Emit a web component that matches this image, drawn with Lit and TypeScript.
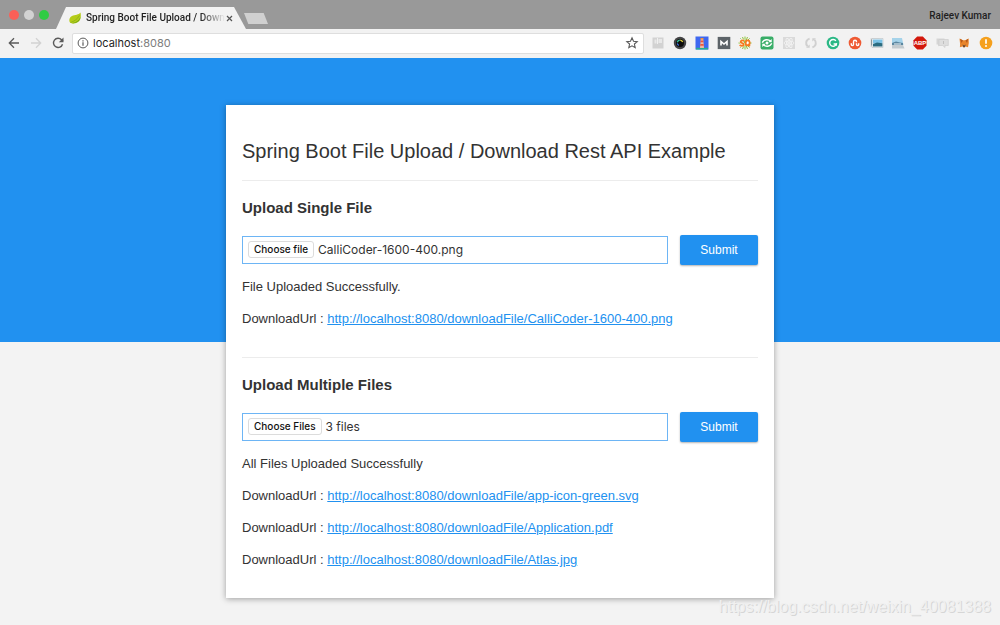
import { LitElement, html, css, svg, nothing } from "lit";
import { customElement, property } from "lit/decorators.js";

const BASE = "http://localhost:8080/downloadFile/";

const star = svg`<path d="M7 1.800l1.500 3.400 3.700.4-2.800 2.400.8 3.700L7 9.800l-3.200 1.900.8-3.700-2.800-2.400 3.700-.4z" fill="none" stroke="#5a5a5a" stroke-width="1.100"/>`;

const extensions = [
  {
    name: "Page layout",
    art: svg`<rect x="1.5" y="1.5" width="11" height="11" fill="#d2d2d2"/><path d="M3.500 3.500h2v4h-2zM7.500 3h3.500v4H7.500z" fill="#e8e8e8"/><path d="M6.500 2v6" stroke="#f0f0f0"/>`,
  },
  {
    name: "Camera",
    art: svg`<circle cx="7" cy="7" r="6.200" fill="#444446"/><circle cx="7" cy="7" r="4" fill="#0c0c0c"/><path d="M4.300 6.200a2.900 2.900 0 0 1 2.500-2.100" stroke="#38c6a0" stroke-width="1.400" fill="none"/><path d="M7.200 4.100a2.900 2.900 0 0 1 2.500 1.900" stroke="#e0cf3e" stroke-width="1.400" fill="none"/><path d="M4.300 7.300a2.900 2.900 0 0 0 1.500 2.100" stroke="#3d6fe0" stroke-width="1.200" fill="none"/>`,
  },
  {
    name: "Lighthouse",
    art: svg`<rect x=".5" y=".5" width="13" height="13" fill="#3f68f0"/><path d="M1 11.800h12v1.700H1z" fill="#27ae8f"/><path d="M5.800 3h2.400l.8 9H5z" fill="#f0b9a0"/><path d="M5.700 4.600h2.600l.2 1.700h-3zM5.400 8h3.200l.2 1.800H5.200z" fill="#f0553d"/><path d="M5.500 2h3v1.500h-3z" fill="#f59135"/>`,
  },
  {
    name: "Markdown",
    art: svg`<rect x=".7" y=".9" width="12.600" height="12.200" fill="#5c6368"/><path d="M4 9.600V5.400L7 8l3-2.600v4.200" stroke="#fff" stroke-width="1.600" fill="none"/>`,
  },
  {
    name: "SEO quake",
    art: svg`<path d="M7 .5v13M.5 7h13M2.400 2.400l9.200 9.200M11.600 2.400l-9.200 9.200M4.500 1l5 12M9.500 1l-5 12" stroke="#8fc43c" stroke-width="1"/><path d="M6.200 5C5 3.900 2.500 4.500 2.600 5.900s3.500.9 3.100 2.600S3 10 1.600 9" stroke="#fff" stroke-width="2.400" fill="none"/><path d="M6.200 5C5 3.900 2.500 4.500 2.600 5.900s3.500.9 3.100 2.600S3 10 1.600 9" stroke="#f57a1f" stroke-width="1.800" fill="none"/><ellipse cx="9.700" cy="6.900" rx="2" ry="2.600" stroke="#f57a1f" stroke-width="1.700" fill="#fff"/><path d="M9.700 8l2.300 2.300" stroke="#f57a1f" stroke-width="1.600"/>`,
  },
  {
    name: "Feed refresh",
    art: svg`<rect x=".5" y=".5" width="13" height="13" rx="2" fill="#38ad67"/><path d="M2.200 6.600C4 3.400 8 2.700 10.700 5.200M11.800 7.400C10 10.600 6 11.300 3.300 8.800" stroke="#fff" stroke-width="1.400" fill="none"/><path d="M11.700 2.900v3.400H8.300zM2.300 11.100V7.700h3.400z" fill="#fff"/><circle cx="7" cy="7" r="1.500" fill="#fff"/>`,
  },
  {
    name: "React tools",
    art: svg`<rect x="1" y="1" width="12" height="12" fill="#dadada"/><g fill="none" stroke="#f2f2f2" stroke-width=".9"><ellipse cx="7" cy="7" rx="5" ry="2"/><ellipse cx="7" cy="7" rx="5" ry="2" transform="rotate(60 7 7)"/><ellipse cx="7" cy="7" rx="5" ry="2" transform="rotate(120 7 7)"/></g><circle cx="7" cy="7" r="1" fill="#f2f2f2"/>`,
  },
  {
    name: "Sync",
    art: svg`<path d="M5.600 2.600C1.600 4 1.300 8 3.600 10.400" stroke="#d0d0d0" stroke-width="2" fill="none"/><path d="M8.400 11.400c4-1.400 4.300-5.400 2-7.800" stroke="#d0d0d0" stroke-width="2" fill="none"/><path d="M2 11.800h3.700V8.500zM12 2.200H8.300v3.300z" fill="#d0d0d0"/>`,
  },
  {
    name: "Grammar check",
    art: svg`<circle cx="7" cy="7" r="6.300" fill="#2bb886"/><path d="M9.900 4.900A3.400 3.400 0 1 0 10.300 8H7.600" stroke="#fff" stroke-width="1.400" fill="none"/><path d="M10.400 7.300v2.500" stroke="#fff" stroke-width="1.100"/>`,
  },
  {
    name: "Stumble",
    art: svg`<circle cx="7" cy="7" r="6.300" fill="#ee5a33"/><path d="M3.300 7.300v1.200a1.100 1.100 0 0 0 2.200 0V5.700a1.500 1.500 0 0 1 3 0v.6M8.500 7.300v1.200a1.100 1.100 0 0 0 2.200 0V7.300" stroke="#fff" stroke-width="1.400" fill="none"/>`,
  },
  {
    name: "Pictures",
    art: svg`<path d="M.5 2h9v9h-9z" fill="#dcdcdc"/><path d="M2 2.500h11v9H2z" fill="#f5f5f5" stroke="#b5bfc4" stroke-width=".6"/><path d="M3 3.500h9.400v4H3z" fill="#7cc3e6"/><path d="M3 8l4-1.500 5.400.7v3.300H3z" fill="#2b6c80"/><path d="M1.500 3.500v6" stroke="#8a979c"/>`,
  },
  {
    name: "Landscape",
    art: svg`<path d="M1 2h10l1.500 7H1z" fill="#a5d3ea"/><path d="M1 7l4-1.500 4 1 3 .6V9H1z" fill="#5b87a0"/><path d="M1 9h11l1.500 3.500H1z" fill="#c3cbcf"/><path d="M3 8h7" stroke="#eef5f8"/>`,
  },
  {
    name: "Ad blocker",
    art: svg`<path d="M4.200.5h5.600l3.700 3.700v5.600l-3.700 3.700H4.200L.5 9.800V4.200z" fill="#d3180c"/><text x="7" y="9.200" text-anchor="middle" font-family="Liberation Sans, sans-serif" font-size="6" font-weight="700" fill="#fff">ABP</text>`,
  },
  {
    name: "Comments",
    art: svg`<path d="M1.500 2.500h8v6H5l-2 2v-2H1.500z" fill="#d6d6d6"/><path d="M4 3.500h9.300v6H10v2l-2.200-2H4z" fill="#dedede" stroke="#cdcdcd" stroke-width=".7"/><path d="M8.500 5v3" stroke="#c0c0c0"/>`,
  },
  {
    name: "Fox",
    art: svg`<path d="M2.500 2.500L6 4.200h2.300l3.300-1.700.2 4.500-.8 4.300-2.600-.7-1.400.9-1.500-.9-2.600.7.200-3.300z" fill="#e8852b"/><path d="M3 2.800L6 4.500 4.500 7zM11.300 2.800L8.500 4.500 10 7z" fill="#b65a1c"/><path d="M5.600 8.500l1.500 1 1.500-1-.6 2.700H6.200z" fill="#6b4a33"/>`,
  },
  {
    name: "Notice",
    art: svg`<circle cx="7" cy="7" r="6.300" fill="#f5a01d"/><path d="M7 3.200v4.600" stroke="#fff" stroke-width="1.700"/><circle cx="7" cy="10" r="1" fill="#fff"/>`,
  },
];

@customElement("browser-bar")
export class BrowserBar extends LitElement {
  static styles = css`
    :host {
      display: block;
      font-family: Roboto, Inter, sans-serif;
      color: #1f1f1f;
    }
    svg {
      display: block;
      flex: none;
    }
    button {
      all: unset;
      display: block;
      flex: none;
      cursor: pointer;
    }
    .tabs {
      display: flex;
      align-items: flex-end;
      height: 29px;
      background: #999;
    }
    .lights {
      display: flex;
      align-self: center;
      gap: 5px;
      padding: 0 7px 0 9px;
    }
    .light {
      width: 10px;
      height: 10px;
      border-radius: 50%;
    }
    .close {
      background: #fb5f57;
    }
    .min {
      background: #d2d2d2;
    }
    .max {
      background: #2fcb44;
    }
    .tab {
      display: flex;
      flex: none;
      align-items: center;
      box-sizing: border-box;
      width: 190px;
      height: 22px;
      padding: 0 13px;
      background: #f2f2f2;
      clip-path: polygon(0 100%, 10px 0, 178px 0, 100% 100%);
    }
    .title {
      flex: 1;
      min-width: 0;
      margin: 0 1px 0 5px;
      white-space: nowrap;
      font-size: 10px;
      font-weight: 500;
      line-height: 16px;
      mask-image: linear-gradient(90deg, #000 82%, transparent);
    }
    .new {
      width: 24px;
      height: 11px;
      margin: 0 0 5px -2px;
      background: #d0d0d0;
      clip-path: polygon(0 0, 82% 0, 100% 100%, 18% 100%);
    }
    .user {
      align-self: center;
      margin-left: auto;
      padding: 2px 9px 0 0;
      font-size: 10px;
      font-weight: 500;
    }
    .tools {
      display: flex;
      align-items: center;
      box-sizing: border-box;
      height: 29px;
      padding: 0 7px 1px;
      background: #f2f2f2;
    }
    .nav {
      display: flex;
      gap: 8px;
      padding-right: 7px;
    }
    .address {
      display: flex;
      flex: 1;
      align-items: center;
      box-sizing: border-box;
      height: 21px;
      min-width: 0;
      padding: 0 4px;
      border: 1px solid #dedede;
      border-radius: 2px;
      background: #fff;
      font-family: Inter, Roboto, sans-serif;
      font-size: 11px;
    }
    .url {
      flex: 1;
      padding-left: 4px;
    }
    .port {
      color: #7d7d7d;
    }
    .extensions {
      display: flex;
      justify-content: space-between;
      width: 342px;
      margin-left: 7px;
    }
  `;

  render() {
    return html`
      <div class="tabs">
        <div class="lights">
          <span class="light close"></span><span class="light min"></span><span class="light max"></span>
        </div>
        <div class="tab">
          <svg width="12" height="14" viewBox="0 0 12 14" aria-hidden="true">
            <path d="M11.500 1.500C9.800 4 6 3.600 3 5 .5 6.200-.3 9 .8 11.300c2 1.900 6.700 1.700 9-.7C11.900 8.500 12.200 4.800 11.500 1.500z" fill="#b5cc18"/>
            <path d="M11.500 6c-.5 4-4 6.500-8.500 6.300 4-.8 7-2.700 8.500-6.300z" fill="#5c9c1c"/>
            <path d="M1.500 11.500C5 10.500 8.500 8 10.500 4.500" stroke="#8fb51a" fill="none"/>
          </svg>
          <span class="title">Spring Boot File Upload / Down</span>
          <button aria-label="Close tab">
            <svg width="7" height="7" viewBox="0 0 7 7"><path d="M1 1l5 5M6 1L1 6" stroke="#555" stroke-width="1.200"/></svg>
          </button>
        </div>
        <button class="new" aria-label="New tab"></button>
        <span class="user">Rajeev Kumar</span>
      </div>
      <div class="tools">
        <div class="nav">
          <button aria-label="Back">
            <svg width="14" height="14" viewBox="0 0 14 14"><path d="M12 7H2.500M7 2.300L2.300 7 7 11.700" fill="none" stroke="#5a5a5a" stroke-width="1.300"/></svg>
          </button>
          <button aria-label="Forward">
            <svg width="14" height="14" viewBox="0 0 14 14"><path d="M2 7h9.500M7 2.300L11.700 7 7 11.700" fill="none" stroke="#d2d2d2" stroke-width="1.300"/></svg>
          </button>
          <button aria-label="Reload">
            <svg width="14" height="14" viewBox="0 0 14 14"><path d="M11.500 8.200A4.600 4.600 0 1 1 10.500 3.800L12 5.300" fill="none" stroke="#5a5a5a" stroke-width="1.400"/><path d="M12.500 1.500v4.700H7.800z" fill="#5a5a5a"/></svg>
          </button>
        </div>
        <div class="address">
          <svg width="12" height="12" viewBox="0 0 12 12" aria-hidden="true"><circle cx="6" cy="6" r="4.900" fill="none" stroke="#5a5a5a"/><path d="M6 5.200v3.500M6 3.200v1.200" stroke="#5a5a5a" stroke-width="1.200"/></svg>
          <span class="url">localhost<span class="port">:8080</span></span>
          <button aria-label="Bookmark"><svg width="14" height="14" viewBox="0 0 14 14">${star}</svg></button>
        </div>
        <div class="extensions">
          ${extensions.map(
            (e) => html`<button aria-label=${e.name}><svg width="14" height="14" viewBox="0 0 14 14">${e.art}</svg></button>`
          )}
        </div>
      </div>
    `;
  }
}

@customElement("upload-section")
export class UploadSection extends LitElement {
  @property() heading = "";
  @property() action = "";
  @property() chosen = "";
  @property() message = "";
  @property({ type: Boolean }) multiple = false;
  @property({ attribute: false }) files: string[] = [];

  static styles = css`
    :host {
      display: block;
      padding: 17px 0 30px;
      border-top: 1px solid #ececec;
    }
    .heading {
      margin: 0 0 17px;
      font-size: 15px;
      font-weight: 700;
      line-height: 20px;
    }
    .form {
      display: flex;
      align-items: center;
      gap: 12px;
      margin-bottom: 14px;
    }
    .picker {
      position: relative;
      display: flex;
      flex: 1;
      align-items: center;
      gap: 4px;
      box-sizing: border-box;
      height: 28px;
      padding: 0 5px 2px;
      border: 1px solid #6db5f5;
      font-family: Inter, Roboto, sans-serif;
      font-size: 12px;
    }
    .native {
      position: absolute;
      inset: 0;
      width: 100%;
      opacity: 0;
      cursor: pointer;
    }
    .choose {
      padding: 0 5px;
      border: 1px solid #dcdcdc;
      border-radius: 3px;
      background: #fff;
      color: #111;
      font-size: 10px;
      font-weight: 500;
      line-height: 15px;
    }
    .submit {
      width: 78px;
      height: 30px;
      padding: 0;
      border: 0;
      border-radius: 2px;
      background: #2191f0;
      box-shadow: 0 1px 2px rgba(0, 0, 0, 0.3);
      color: #fff;
      font: 12px/30px "Liberation Sans", sans-serif;
    }
    .line {
      margin: 0 0 16px;
      font-size: 13px;
      line-height: 16px;
    }
    .line:last-child {
      margin-bottom: 0;
    }
    .link {
      color: #2191f0;
    }
  `;

  render() {
    return html`
      <h2 class="heading">${this.heading}</h2>
      <form class="form" @submit=${(e: Event) => e.preventDefault()}>
        <label class="picker">
          <span class="choose">${this.action}</span>
          <span>${this.chosen}</span>
          <input class="native" type="file" ?multiple=${this.multiple} />
        </label>
        <button class="submit" type="submit">Submit</button>
      </form>
      ${this.message ? html`<p class="line">${this.message}</p>` : nothing}
      ${this.files.map(
        (f) => html`<p class="line">DownloadUrl : <a class="link" href=${BASE + f}>${BASE + f}</a></p>`
      )}
    `;
  }
}

@customElement("app-root")
export class AppRoot extends LitElement {
  static styles = css`
    :host {
      position: relative;
      display: flex;
      flex-direction: column;
      min-height: 100vh;
      font-family: "Liberation Sans", Arial, sans-serif;
      color: #333;
    }
    .page {
      flex: 1;
      padding: 47px 16px 27px;
      background: linear-gradient(#2191f0 50%, #f3f3f3 50%);
    }
    .card {
      box-sizing: border-box;
      max-width: 548px;
      margin: 0 auto;
      padding: 0 16px;
      background: #fff;
      box-shadow: 0 1px 6px rgba(0, 0, 0, 0.35);
    }
    .title {
      margin: 0;
      padding: 34px 0 17px;
      font-size: 20px;
      font-weight: 400;
      line-height: 24px;
    }
    .watermark {
      position: absolute;
      right: 9px;
      bottom: 9px;
      color: #f0f0f0;
      font-size: 16px;
      line-height: 18px;
      text-shadow: 1px 1px 0 #d6d6d6;
    }
  `;

  render() {
    return html`
      <browser-bar></browser-bar>
      <main class="page">
        <div class="card">
          <h1 class="title">Spring Boot File Upload / Download Rest API Example</h1>
          <upload-section
            heading="Upload Single File"
            action="Choose file"
            chosen="CalliCoder-1600-400.png"
            message="File Uploaded Successfully."
            .files=${["CalliCoder-1600-400.png"]}
          ></upload-section>
          <upload-section
            heading="Upload Multiple Files"
            action="Choose Files"
            chosen="3 files"
            message="All Files Uploaded Successfully"
            multiple
            .files=${["app-icon-green.svg", "Application.pdf", "Atlas.jpg"]}
          ></upload-section>
        </div>
      </main>
      <span class="watermark">https://blog.csdn.net/weixin_40081388</span>
    `;
  }
}
